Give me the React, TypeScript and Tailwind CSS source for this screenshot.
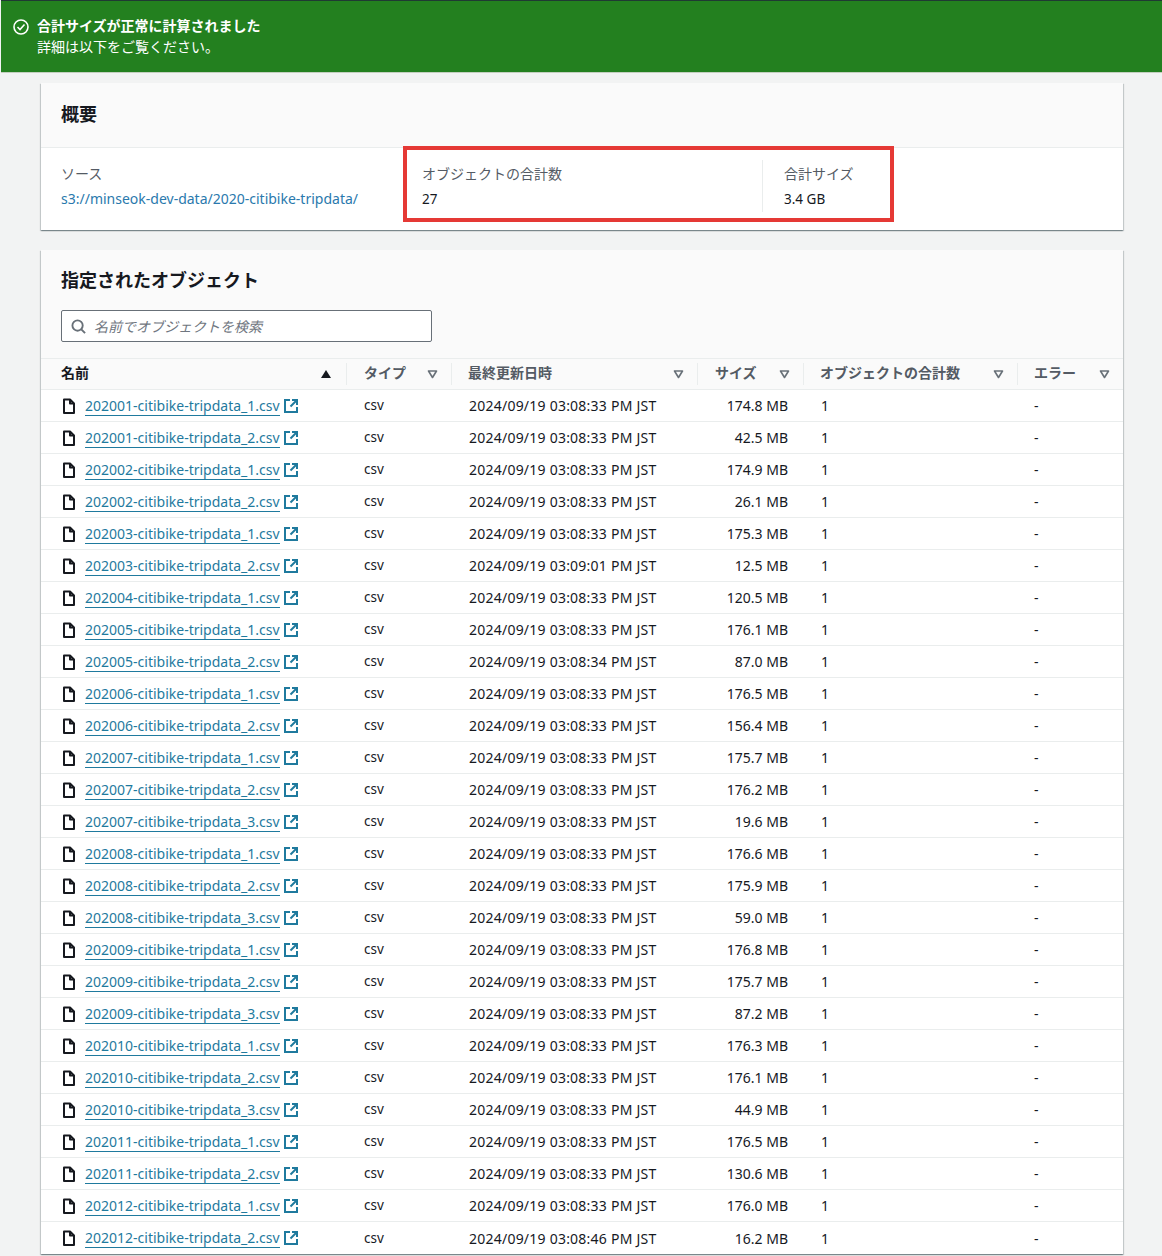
const COLS = "grid grid-cols-[306px_105px_246px_106px_214px_105px]";

const rows: [string, string, string][] = [
  ["202001-citibike-tripdata_1.csv", "03:08:33", "174.8 MB"],
  ["202001-citibike-tripdata_2.csv", "03:08:33", "42.5 MB"],
  ["202002-citibike-tripdata_1.csv", "03:08:33", "174.9 MB"],
  ["202002-citibike-tripdata_2.csv", "03:08:33", "26.1 MB"],
  ["202003-citibike-tripdata_1.csv", "03:08:33", "175.3 MB"],
  ["202003-citibike-tripdata_2.csv", "03:09:01", "12.5 MB"],
  ["202004-citibike-tripdata_1.csv", "03:08:33", "120.5 MB"],
  ["202005-citibike-tripdata_1.csv", "03:08:33", "176.1 MB"],
  ["202005-citibike-tripdata_2.csv", "03:08:34", "87.0 MB"],
  ["202006-citibike-tripdata_1.csv", "03:08:33", "176.5 MB"],
  ["202006-citibike-tripdata_2.csv", "03:08:33", "156.4 MB"],
  ["202007-citibike-tripdata_1.csv", "03:08:33", "175.7 MB"],
  ["202007-citibike-tripdata_2.csv", "03:08:33", "176.2 MB"],
  ["202007-citibike-tripdata_3.csv", "03:08:33", "19.6 MB"],
  ["202008-citibike-tripdata_1.csv", "03:08:33", "176.6 MB"],
  ["202008-citibike-tripdata_2.csv", "03:08:33", "175.9 MB"],
  ["202008-citibike-tripdata_3.csv", "03:08:33", "59.0 MB"],
  ["202009-citibike-tripdata_1.csv", "03:08:33", "176.8 MB"],
  ["202009-citibike-tripdata_2.csv", "03:08:33", "175.7 MB"],
  ["202009-citibike-tripdata_3.csv", "03:08:33", "87.2 MB"],
  ["202010-citibike-tripdata_1.csv", "03:08:33", "176.3 MB"],
  ["202010-citibike-tripdata_2.csv", "03:08:33", "176.1 MB"],
  ["202010-citibike-tripdata_3.csv", "03:08:33", "44.9 MB"],
  ["202011-citibike-tripdata_1.csv", "03:08:33", "176.5 MB"],
  ["202011-citibike-tripdata_2.csv", "03:08:33", "130.6 MB"],
  ["202012-citibike-tripdata_1.csv", "03:08:33", "176.0 MB"],
  ["202012-citibike-tripdata_2.csv", "03:08:46", "16.2 MB"],
];

function FileIcon() {
  return (
    <svg width="16" height="16" viewBox="0 0 16 16" fill="none" stroke="#16191f" strokeWidth="2" strokeLinejoin="round" className="shrink-0">
      <path d="M3 1.5h6l4 4v9.5H3z" />
      <path d="M9 1.5v4h4" />
    </svg>
  );
}

function ExternalIcon() {
  return (
    <svg width="16" height="16" viewBox="0 0 16 16" fill="none" stroke="#1f7a9e" strokeWidth="2" className="shrink-0">
      <path d="M7 2H2v12h12V9" />
      <path d="M9 2h5v5" />
      <path d="M14 2 7.5 8.5" />
    </svg>
  );
}

function SortIcon({ active }: { active?: boolean }) {
  if (active) {
    return (
      <svg width="12" height="10" viewBox="0 0 12 10" className="shrink-0">
        <path d="M6 1 11 9H1z" fill="#16191f" />
      </svg>
    );
  }
  return (
    <svg width="11" height="10" viewBox="0 0 11 10" fill="none" stroke="#687078" strokeWidth="1.6" strokeLinejoin="round" className="shrink-0">
      <path d="M1.5 2h8L5.5 8.5z" />
    </svg>
  );
}

function Head({ label, active, pl }: { label: string; active?: boolean; pl: string }) {
  return (
    <div className={`flex items-center justify-between pr-[13px] h-full ${pl}`}>
      <span className="text-[14px] font-bold text-[#545b64] leading-[18px] -mt-[3px]">{label}</span>
      <SortIcon active={active} />
    </div>
  );
}

export default function App() {
  return (
    <div className="relative h-[1256px] w-[1162px] overflow-hidden bg-[#f2f3f3] text-[14px] text-[#16191f] font-['Noto_Sans','Noto_Sans_CJK_JP',sans-serif]">
      {/* Flash */}
      <div className="h-[73px] ml-px bg-[#23801f] border-t border-t-[#1f3a33] border-b border-b-[#c4cfc0] text-white flex items-start pl-[12px] pt-[14px] gap-[8px]">
        <svg width="16" height="16" viewBox="0 0 16 16" fill="none" stroke="#fff" strokeWidth="1.6" className="mt-[4px] shrink-0">
          <circle cx="8" cy="8" r="7" />
          <path d="M4.5 8 7 10.5l4.5-5" />
        </svg>
        <div className="leading-[21px] text-[14px]">
          <div className="font-bold">合計サイズが正常に計算されました</div>
          <div>詳細は以下をご覧ください。</div>
        </div>
      </div>

      <div className="pl-[41px] pr-[39px] pt-[10px]">
        {/* Summary */}
        <div className="bg-white shadow-[0_1px_1px_0_rgba(0,28,36,0.3),1px_1px_1px_0_rgba(0,28,36,0.15),-1px_1px_1px_0_rgba(0,28,36,0.15)]">
          <div className="h-[65px] bg-[#fafafa] border-b border-[#eaeded] flex items-center pl-[20px]">
            <h2 className="text-[18px] font-bold -mt-[2px]">概要</h2>
          </div>
          <div className="h-[82px] flex pl-[20px] pt-[15px]">
            <div className="w-[361px]">
              <div className="text-[#545b64] leading-[22px]">ソース</div>
              <a className="block mt-[4px] leading-[20px] text-[14px] text-[#2a79ad]">s3://minseok-dev-data/2020-citibike-tripdata/</a>
            </div>
            <div className="w-[340px]">
              <div className="text-[#545b64] leading-[22px]">オブジェクトの合計数</div>
              <div className="mt-[4px] leading-[20px] text-[13.5px]">27</div>
            </div>
            <div className="border-l border-[#eaeded] pl-[21px] h-[52px] -mt-[3px] pt-[3px]">
              <div className="text-[#545b64] leading-[22px]">合計サイズ</div>
              <div className="mt-[4px] leading-[20px] text-[13.5px]">3.4 GB</div>
            </div>
          </div>
        </div>

        {/* Objects */}
        <div className="mt-[20px] bg-white shadow-[0_1px_1px_0_rgba(0,28,36,0.3),1px_1px_1px_0_rgba(0,28,36,0.15),-1px_1px_1px_0_rgba(0,28,36,0.15)]">
          <div className="h-[108px] bg-[#fafafa] pl-[20px] pt-[16px]">
            <h2 className="text-[18px] font-bold leading-[28px]">指定されたオブジェクト</h2>
            <div className="mt-[16px] w-[371px] h-[32px] bg-white border border-[#687078] rounded-[2px] flex items-center pl-[9px] gap-[8px]">
              <svg width="15" height="15" viewBox="0 0 16 16" fill="none" stroke="#687078" strokeWidth="2" className="shrink-0">
                <circle cx="7" cy="7" r="5.5" />
                <path d="m11 11 4 4" />
              </svg>
              <span className="italic text-[#6f7680] text-[14px]">名前でオブジェクトを検索</span>
            </div>
          </div>
          <div className={`${COLS} h-[32px] bg-[#fafafa] border-y border-[#eaeded] items-center`}>
            <div className="pl-[20px] h-[22px] flex items-center justify-between pr-[14px] border-r border-[#eaeded]">
              <span className="text-[14px] font-bold text-[#16191f] leading-[18px] -mt-[3px]">名前</span>
              <SortIcon active />
            </div>
            <div className="border-r border-[#eaeded] h-[22px]"><Head label="タイプ" pl="pl-[17px]" /></div>
            <div className="border-r border-[#eaeded] h-[22px]"><Head label="最終更新日時" pl="pl-[16px]" /></div>
            <div className="border-r border-[#eaeded] h-[22px]"><Head label="サイズ" pl="pl-[17px]" /></div>
            <div className="border-r border-[#eaeded] h-[22px]"><Head label="オブジェクトの合計数" pl="pl-[16px]" /></div>
            <div className="h-[22px]"><Head label="エラー" pl="pl-[16px]" /></div>
          </div>
          {rows.map(([name, time, size], i) => (
            <div key={name} className={`${COLS} h-[32px] items-center text-[14px] ${i < rows.length - 1 ? "border-b border-[#eaeded]" : ""}`}>
              <div className="pl-[20px] flex items-center">
                <FileIcon />
                <a className="ml-[8px] text-[14px] text-[#1f7a9e] border-b border-[#1f7a9e] leading-[18px] mt-[1px] whitespace-nowrap">{name}</a>
                <span className="ml-[3px]"><ExternalIcon /></span>
              </div>
              <div className="pl-[17px] text-[13.5px]">csv</div>
              <div className="pl-[17px] whitespace-nowrap tracking-[0.23px]">2024/09/19 {time} PM JST</div>
              <div className="pr-[16px] text-right">{size}</div>
              <div className="pl-[17px]">1</div>
              <div className="pl-[16px]">-</div>
            </div>
          ))}
        </div>
      </div>

      {/* Highlight */}
      <div className="absolute left-[403px] top-[146px] w-[491px] h-[76px] border-[4px] border-[#e53935]" />
    </div>
  );
}
